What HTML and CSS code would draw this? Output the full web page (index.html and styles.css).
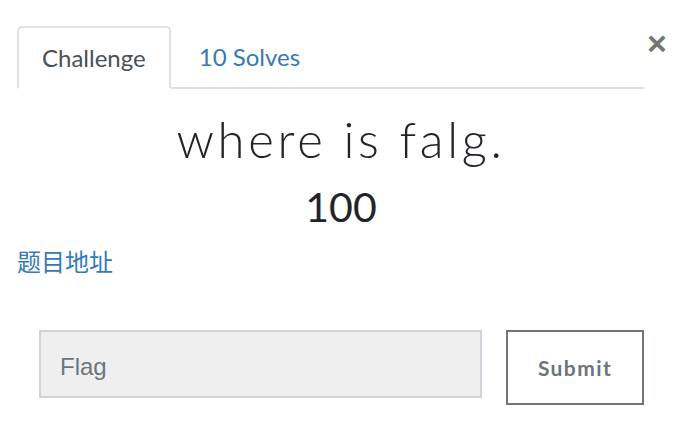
FILE: index.html
```html
<!DOCTYPE html>
<html>
<head>
<meta charset="utf-8">
<link rel="stylesheet" href="styles.css">
</head>
<body>
<div class="modal">
  <button class="close" aria-label="Close">&times;</button>
  <ul class="tabs">
    <li class="tab active">Challenge</li>
    <li class="tab">10 Solves</li>
  </ul>
  <h2 class="name">where is falg.</h2>
  <h3 class="value">100</h3>
  <a class="link" href="#">题目地址</a>
  <form class="submit-row">
    <input class="flag" type="text" placeholder="Flag">
    <button class="submit" type="button">Submit</button>
  </form>
</div>
</body>
</html>
```
FILE: styles.css
```css
html, body {
  margin: 0;
  padding: 0;
  background: #fff;
}
.modal {
  position: relative;
  width: 692px;
  height: 423px;
  box-sizing: border-box;
  padding: 26px 27px 0 17px;
  font-family: Lato, "Noto Sans", sans-serif;
}
.close {
  position: absolute;
  top: 26px;
  left: 647px;
  border: 0;
  background: none;
  padding: 0;
  font-family: "Liberation Sans", Arial, sans-serif;
  font-size: 34px;
  font-weight: 700;
  line-height: 34px;
  color: #757575;
}
.tabs {
  display: flex;
  list-style: none;
  margin: 0;
  padding: 0;
  width: 628px;
  border-bottom: 2px solid #dee2e6;
}
.tab {
  height: 61px;
  box-sizing: border-box;
  display: flex;
  align-items: center;
  padding: 0 25px 1px 26px;
  font-size: 24px;
  color: #337ab7;
  margin-bottom: -2px;
  border: 2px solid transparent;
  border-radius: 5px 5px 0 0;
}
.tab.active {
  color: #495057;
  border-color: #dee2e6 #dee2e6 #fff;
  border-bottom: 2px solid #fff;
  height: 63px;
  padding: 0 23px 1px 23px;
}
.name {
  margin: 22px 0 0;
  text-align: center;
  font-family: Lato, sans-serif;
  font-weight: 300;
  font-size: 49px;
  letter-spacing: 3.7px;
  line-height: 56px;
  color: #212529;
}
.value {
  margin: 15px 0 0;
  text-align: center;
  font-weight: 400;
  font-size: 41px;
  line-height: 50px;
  color: #212529;
}
.link {
  display: inline-block;
  margin-top: 14px;
  font-family: "Noto Sans CJK SC", sans-serif;
  font-size: 24px;
  line-height: 30px;
  color: #337ab7;
  text-decoration: none;
}
.submit-row {
  display: flex;
  align-items: flex-start;
  margin: 54px 0 0 22px;
  gap: 24px;
}
.flag {
  width: 443px;
  height: 68px;
  box-sizing: border-box;
  border: 2px solid #ced4da;
  background: #efefef;
  padding: 6px 19px 0;
  font-family: "Liberation Sans", Arial, sans-serif;
  font-size: 24px;
  color: #495057;
  outline: none;
}
.flag::placeholder {
  color: #6c757d;
}
.submit {
  width: 138px;
  height: 75px;
  box-sizing: border-box;
  border: 2px solid #6c757d;
  background: #fff;
  font-family: Lato, sans-serif;
  font-weight: 700;
  font-size: 21px;
  letter-spacing: 1.4px;
  color: #6c757d;
  padding: 0;
}
```
